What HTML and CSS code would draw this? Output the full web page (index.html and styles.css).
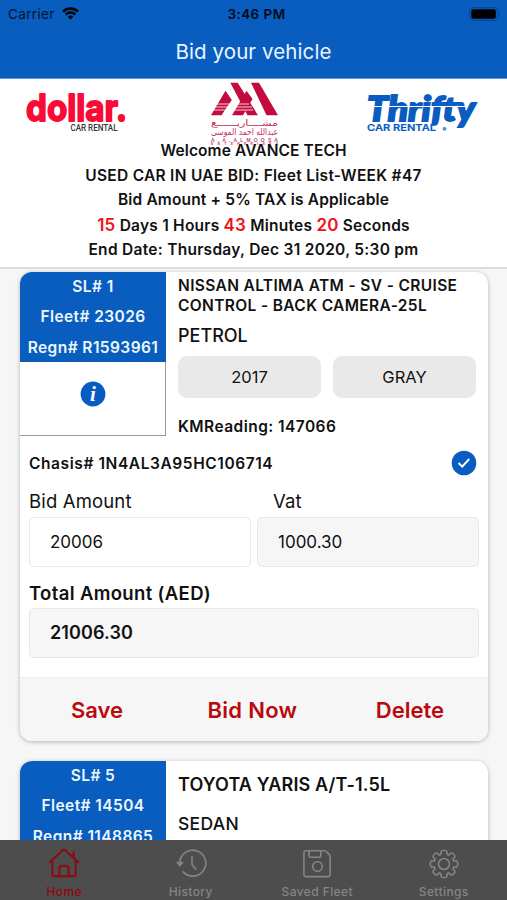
FILE: index.html
```
<!DOCTYPE html>
<html lang="en">
<head>
<meta charset="utf-8">
<title>Bid your vehicle</title>
<link rel="stylesheet" href="styles.css">
</head>
<body>
<div class="app">
  <header class="navbar">
    <div class="status">
      <span class="carrier">Carrier
        <svg width="17" height="13" viewBox="0 0 17 13" fill="none" stroke="#000" stroke-width="2.5"><path d="M1 4.7a10.6 10.6 0 0 1 15 0M3.7 7.5a6.8 6.8 0 0 1 9.6 0"/><path d="M8.5 12.5L5.8 9.8a3.8 3.8 0 0 1 5.4 0z" fill="#000" stroke="none"/></svg>
      </span>
      <span class="clock">3:46 PM</span>
      <svg class="battery" width="32" height="14" viewBox="0 0 32 14"><rect x=".6" y=".6" width="28" height="12.8" rx="3.5" fill="none" stroke="#07479a" stroke-width="1.1"/><rect x="2.3" y="2.3" width="24.5" height="9.4" rx="2" fill="#000"/><path d="M30 4.7q2 2.3 0 4.6z" fill="#07479a"/></svg>
    </div>
    <h1 class="title">Bid your vehicle</h1>
  </header>

  <section class="banner">
    <div class="logos">
      <svg class="logo" width="110" height="64" viewBox="0 0 110 64">
        <text class="dollar" x="5" y="42" textLength="101" lengthAdjust="spacingAndGlyphs">dollar.</text>
        <text class="dollar-sub" x="49.5" y="51.7" textLength="47" lengthAdjust="spacingAndGlyphs">CAR RENTAL</text>
      </svg>
      <svg class="logo" width="72" height="66" viewBox="0 0 72 66">
        <g fill="#c40b40">
          <path d="M19.300 3.700h7.400L47 36.300H36.500zM40 3.700h8L67 36.300H55.500z"/>
          <path d="M14.500 11.700L20.800 21 10.500 36.300H0zM35.500 11.700L41.500 20 32 36.300H21z"/>
        </g>
        <path d="M5 25h33M4 28h37M2 31h40" stroke="#fff" stroke-width=".8"/>
        <text class="arabic" x="0" y="46.500" textLength="67" lengthAdjust="spacingAndGlyphs" direction="ltr">مشــــاريــــــع</text>
        <text class="arabic" x="0" y="56" textLength="67" lengthAdjust="spacingAndGlyphs" direction="ltr">عبدالله احمد الموسى</text>
        <text class="almoosa" x="0" y="62.600" textLength="67">A.A.ALMOOSA</text>
        <text class="almoosa small" x="0" y="65.800" textLength="67">ENTERPRISES</text>
      </svg>
      <svg class="logo" width="120" height="64" viewBox="0 0 120 64">
        <text class="thrifty" x="6" y="41.500" textLength="108" lengthAdjust="spacingAndGlyphs">Thrifty</text>
        <path d="M5 27.500h99" stroke="#fff" stroke-width="1.200"/>
        <text class="thrifty-sub" x="6" y="52" textLength="69" lengthAdjust="spacingAndGlyphs">CAR RENTAL</text>
        <circle cx="83.500" cy="49.800" r="1.500" fill="#6c9bd6" stroke="#0a5cc0" stroke-width=".6"/>
      </svg>
    </div>
    <div class="notice">
      <p class="l1">Welcome AVANCE TECH</p>
      <p class="l2">USED CAR IN UAE BID: Fleet List-WEEK #47</p>
      <p class="l3">Bid Amount + 5% TAX is Applicable</p>
      <p class="l4"><b>15</b> Days 1 Hours <b>43</b> Minutes <b>20</b> Seconds</p>
      <p class="l5">End Date: Thursday, Dec 31 2020, 5:30 pm</p>
    </div>
  </section>

  <main class="list">
    <article class="card">
      <div class="top">
        <div class="ident">
          <div class="numbers"><span>SL# 1</span><span>Fleet# 23026</span><span>Regn# R1593961</span></div>
          <div class="info"><svg width="26" height="26" viewBox="0 0 26 26"><circle cx="13" cy="13" r="12.4" fill="#075cbf"/><text class="i" x="13" y="20" text-anchor="middle">i</text></svg></div>
        </div>
        <div class="details">
          <h2 class="name">NISSAN ALTIMA ATM - SV - CRUISE<br>CONTROL - BACK CAMERA-25L</h2>
          <p class="kind">PETROL</p>
          <div class="chips"><span class="chip">2017</span><span class="chip">GRAY</span></div>
          <p class="km">KMReading: 147066</p>
        </div>
      </div>
      <div class="chasis"><span>Chasis# 1N4AL3A95HC106714</span>
        <svg width="26" height="26" viewBox="0 0 26 26"><circle cx="13" cy="13" r="12.3" fill="#0a5bc2"/><path d="M7.600 13l3.600 3.600 7-7.600" fill="none" stroke="#fff" stroke-width="1.900"/></svg>
      </div>
      <div class="fields">
        <label class="bidlabel">Bid Amount</label><label class="vatlabel">Vat</label>
        <div class="field open">20006</div><div class="field">1000.30</div>
      </div>
      <p class="total">Total Amount (AED)</p>
      <div class="field sum">21006.30</div>
      <footer class="actions"><span class="save">Save</span><span class="bid">Bid Now</span><span class="delete">Delete</span></footer>
    </article>
    <article class="card">
      <div class="top">
        <div class="ident"><div class="numbers"><span>SL# 5</span><span>Fleet# 14504</span><span>Regn# 1148865</span></div></div>
        <div class="details second">
          <h2 class="model">TOYOTA YARIS A/T-1.5L</h2>
          <p class="sedan">SEDAN</p>
        </div>
      </div>
    </article>
  </main>

  <nav class="tabs">
    <a class="tab active"><svg width="32" height="32" viewBox="0 0 32 32"><path d="M1.8 14.2L14.4 2.5q1.6-1.3 3.2 0l12.6 11.7M4.4 12.5v14q0 1.8 1.8 1.8h19.600q1.800 0 1.800-1.800v-14M25.600 9.500V4.200M11.300 28v-7.500q0-2.800 2.800-2.800h3.800q2.800 0 2.800 2.800V28"/></svg><span>Home</span></a>
    <a class="tab"><svg width="32" height="32" viewBox="0 0 32 32"><path d="M4.800 15A13 13 0 1 1 8.200 23.900M17 9v7.500l3.800 4.700"/><path d="M2 14.200h6l-3 4z" fill="currentColor" stroke-width="1"/></svg><span>History</span></a>
    <a class="tab"><svg width="32" height="32" viewBox="0 0 32 32"><path d="M5 2.800h18.300q1.200 0 2 .8l3 3q.8.800.8 2v17.700q0 2.300-2.300 2.300H5.200q-2.300 0-2.300-2.300V5Q2.900 2.800 5 2.800zM8 3v4.800q0 1.400 1.400 1.400h9q1.400 0 1.400-1.400V3"/><circle cx="16.500" cy="18.500" r="4.700"/></svg><span>Saved Fleet</span></a>
    <a class="tab"><svg width="32" height="32" viewBox="-16 -16 32 32"><path d="M10.400-2.800Q11-3.200 12.600-2.900 13.700-2.500 13.700 0T12.600 2.900Q11 3.200 10.400 2.800 8.600 3.700 9.300 5.400 9.800 5.500 10.900 6.900 11.300 8.100 9.700 9.700T6.900 10.900Q5.500 9.800 5.400 9.300 3.700 8.600 2.800 10.400 3.200 11 2.900 12.600 2.500 13.700 0 13.700T-2.900 12.600Q-3.200 11-2.800 10.400-3.700 8.600-5.400 9.300-5.500 9.800-6.900 10.900-8.100 11.300-9.700 9.700T-10.900 6.900Q-9.800 5.500-9.300 5.400-8.600 3.700-10.400 2.800-11 3.200-12.600 2.900-13.700 2.500-13.700 0T-12.600-2.900Q-11-3.200-10.400-2.800-8.600-3.700-9.300-5.400-9.800-5.500-10.900-6.900-11.300-8.100-9.700-9.700T-6.900-10.900Q-5.500-9.800-5.400-9.300-3.700-8.600-2.800-10.400-3.200-11-2.900-12.600-2.500-13.700 0-13.700T2.900-12.600Q3.200-11 2.800-10.400 3.700-8.600 5.400-9.300 5.500-9.800 6.900-10.900 8.100-11.300 9.700-9.700T10.900-6.900Q9.800-5.500 9.300-5.400 8.600-3.700 10.400-2.800z"/><circle r="5.500"/></svg><span>Settings</span></a>
  </nav>
</div>
</body>
</html>
```
FILE: styles.css
```
* { box-sizing: border-box; }
body { margin: 0; font-family: Inter, "Liberation Sans", sans-serif; color: #111; background: #f6f6f6; }
h1, h2, p { margin: 0; }
.app { height: 900px; display: flex; flex-direction: column; overflow: hidden; }
.navbar { height: 79px; flex: none; background: #085dbe; border-bottom: 1px solid #5b96d8; }
.status { height: 27px; display: grid; grid-template-columns: 1fr auto 1fr; align-items: center; padding: 0 6px 0 8px; color: #06152a; font-size: 13.5px; }
.carrier { display: flex; align-items: center; gap: 7px; letter-spacing: .35px; }
.clock { font-weight: 600; letter-spacing: .45px; position: relative; left: 2px; color: #030a14; }
.battery { justify-self: end; }
.title { font-size: 20.5px; font-weight: 400; line-height: 50px; text-align: center; color: #eaf4ff; letter-spacing: .1px; }

.banner { height: 190px; flex: none; background: #fff; border-bottom: 2px solid #dcdcdc; }
.logos { height: 60px; display: flex; padding-left: 21px; }
.logo { overflow: visible; flex: none; }
.logos .logo:nth-child(2) { margin: 0 78px 0 80px; }
.dollar { font: 700 37px Inter; fill: #fa0a37; stroke: #fa0a37; stroke-width: 1.800; stroke-linejoin: round; }
.dollar-sub { font: 500 8.5px Roboto; fill: #333; }
.arabic { font: 400 9px "DejaVu Sans"; fill: #c4305c; }
.almoosa { font: 700 5px "Liberation Sans"; fill: #c94770; }
.small { font-size: 3.5px; }
.thrifty { font: italic 900 35px Lato; fill: #0a5cc0; stroke: #0a5cc0; stroke-width: 1.8; }
.thrifty-sub { font: 600 9.5px Inter; fill: #0a5cc0; stroke: #0a5cc0; stroke-width: .2; }
.notice { font-size: 15.5px; font-weight: 600; line-height: 24.5px; text-align: center; white-space: nowrap; }
.notice b { color: #f01216; font-size: 17px; font-weight: 600; }
.l1 { letter-spacing: .1px; }
.l2 { letter-spacing: .28px; }
.l3 { letter-spacing: .16px; }
.l4 { letter-spacing: .23px; }
.l5 { letter-spacing: .28px; }

.list { flex: 1; min-height: 0; overflow: hidden; padding: 3px 19px 0 20px; }
.card { background: #fff; border-radius: 12px; overflow: hidden; box-shadow: 0 1px 4px rgba(0,0,0,.28); margin-bottom: 20px; height: 469px; display: flex; flex-direction: column; }
.top { display: flex; height: 164px; }
.ident { width: 146px; height: 164px; border: solid #999; border-width: 0 1px 1px 0; display: flex; flex-direction: column; }
.numbers { height: 90px; margin-right: -1px; background: #085dbe; color: #edf6ff; display: flex; flex-direction: column; align-items: center; font-size: 15.5px; font-weight: 600; line-height: 30.5px; letter-spacing: .42px; white-space: nowrap; }
.numbers span:first-child { line-height: 29px; padding-bottom: 1px; }
.info { flex: 1; display: flex; justify-content: center; align-items: center; padding-bottom: 10px; }
.i { font: italic 700 21px "Liberation Serif"; fill: #fff; }
.details { flex: 1; padding: 4px 12px 0 12px; }
.name { font-size: 15.5px; line-height: 19.5px; font-weight: 600; letter-spacing: .36px; white-space: nowrap; }
.kind { font-size: 18px; font-weight: 500; line-height: 22px; margin-top: 9.5px; }
.chips { display: flex; gap: 12px; margin-top: 9.5px; }
.chip { flex: 1; height: 42px; line-height: 42px; border-radius: 9px; background: #e9e9e9; text-align: center; font-size: 16.5px; }
.km { font-size: 15.5px; font-weight: 600; margin-top: 18.5px; line-height: 20px; letter-spacing: .45px; }
.chasis { height: 54px; padding: 0 11px 0 9px; display: flex; justify-content: space-between; align-items: center; font-size: 15.5px; letter-spacing: .58px; font-weight: 600; }
.fields { display: grid; grid-template-columns: 1fr 1fr; column-gap: 6px; padding: 0 9px; }
.fields label { font-size: 18.5px; line-height: 23px; padding-bottom: 4px; letter-spacing: .15px; }
.vatlabel { padding-left: 16px; }
.field { height: 50px; border: 1px solid #e8e8e8; border-radius: 5px; background: #f6f6f6; padding-left: 20px; font-size: 17px; line-height: 49px; }
.open { background: #fff; }
.total { margin: 15px 9px 3px; font-size: 18.5px; font-weight: 600; line-height: 23px; letter-spacing: .35px; }
.sum { margin: 0 9px; font-size: 18px; font-weight: 600; line-height: 48px; letter-spacing: .1px; }
.actions { margin-top: auto; height: 64px; border-top: 1px solid #eee; background: #f6f6f6; display: flex; justify-content: space-between; align-items: center; padding: 0 44px 0 51px; color: #b90a0d; font-size: 22px; font-weight: 600; }
.bid { letter-spacing: .3px; padding-left: 6px; }
.second { padding-top: 12px; }
.model { font-size: 18px; line-height: 24px; font-weight: 600; letter-spacing: .14px; white-space: nowrap; }
.sedan { font-size: 17.5px; line-height: 24px; font-weight: 500; margin-top: 15px; letter-spacing: .3px; }

.tabs { height: 60px; flex: none; background: #4d4d4d; display: grid; grid-template-columns: repeat(4, 1fr); padding-left: 1px; }
.tab { display: flex; flex-direction: column; align-items: center; padding-top: 8px; color: #858585; font-size: 12px; font-weight: 500; line-height: 15px; letter-spacing: .4px; }
.tab svg { fill: none; stroke: currentColor; stroke-width: 1.6; stroke-linecap: round; stroke-linejoin: round; }
.tab span { margin-top: 4px; white-space: nowrap; }
.active { color: #8f090c; }
.active svg { stroke-width: 2; }
```
